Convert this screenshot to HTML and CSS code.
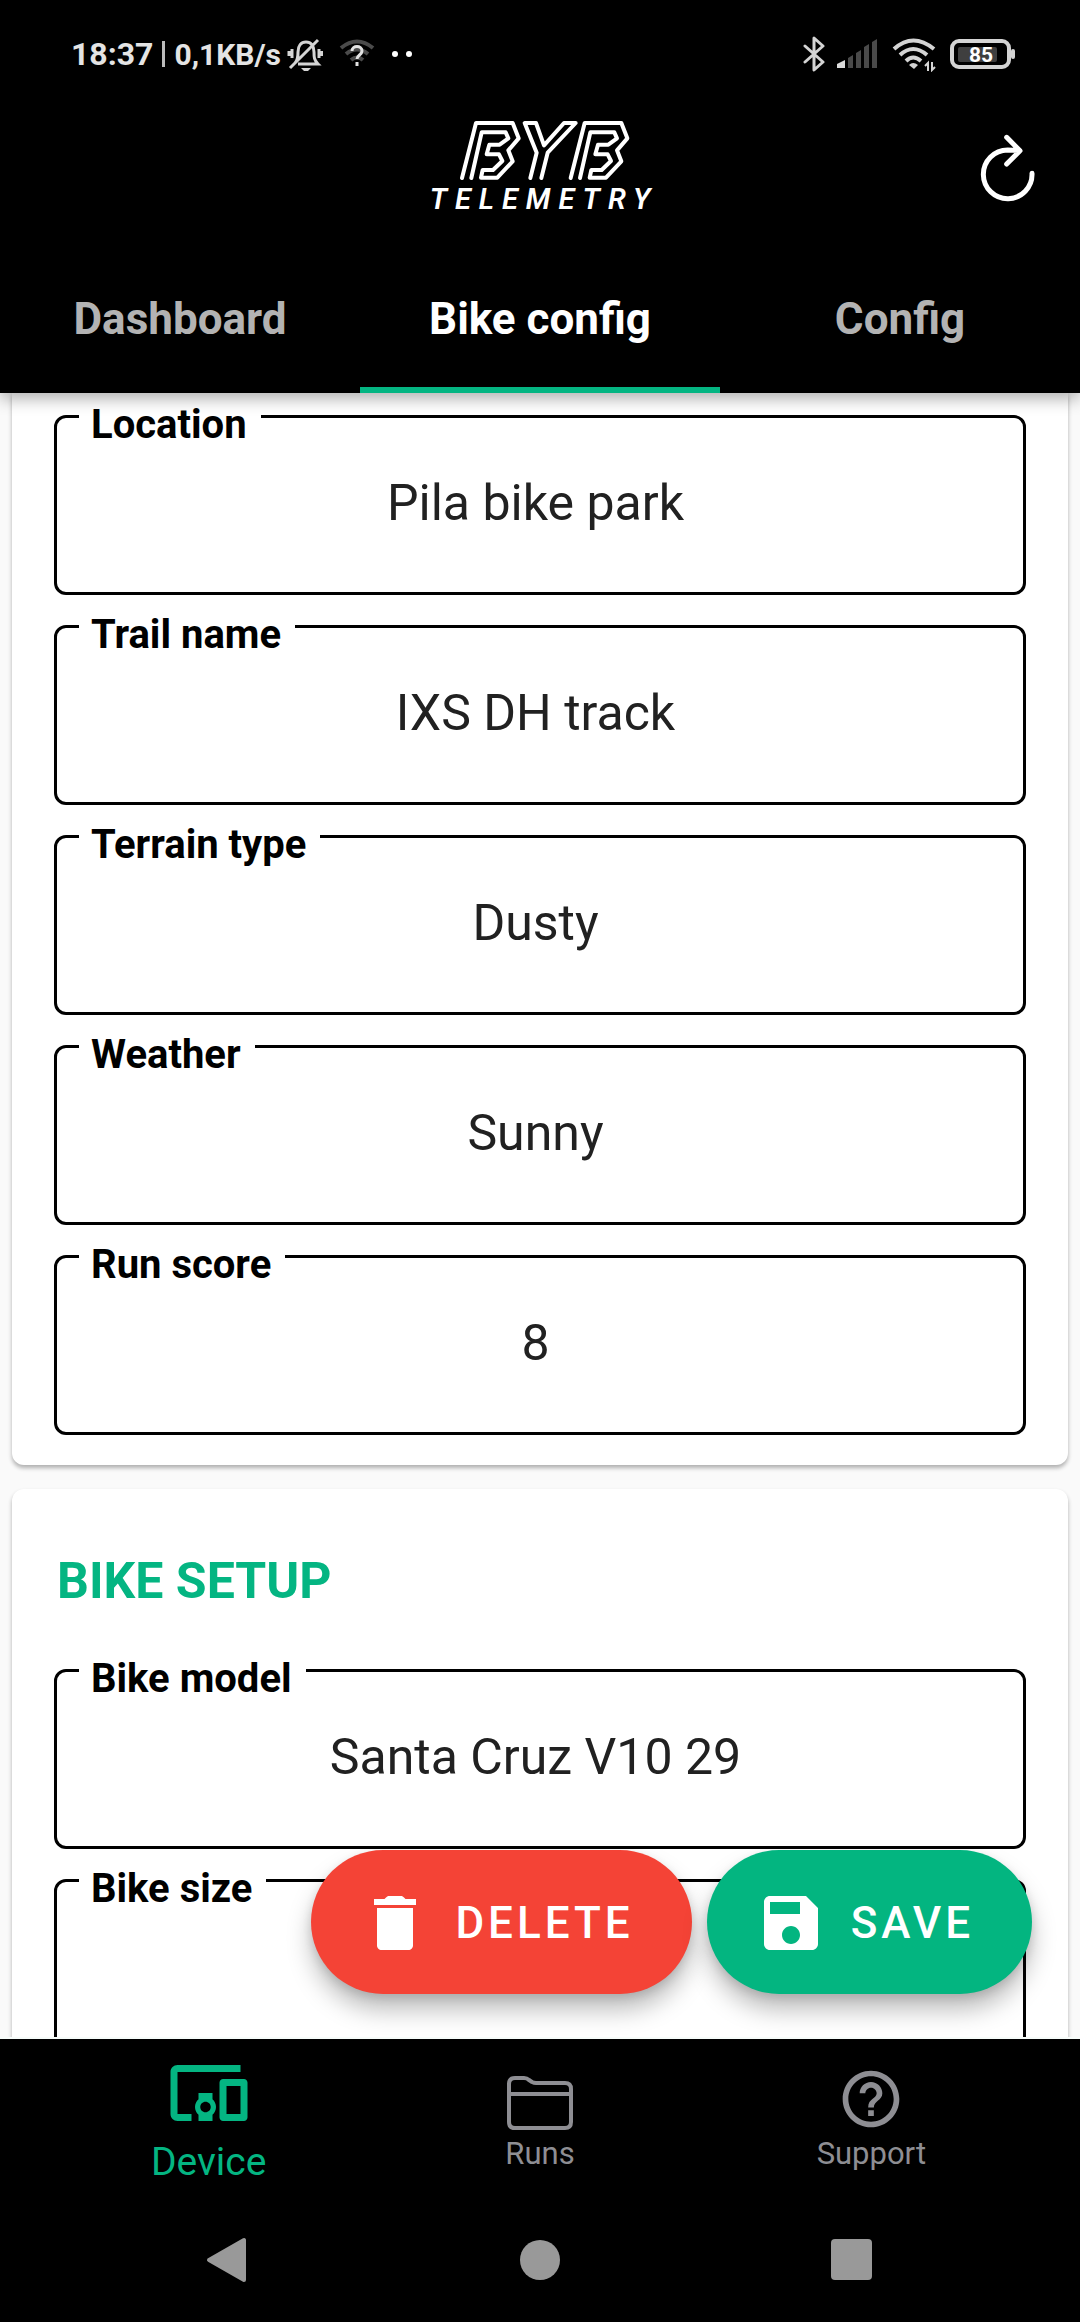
FILE: index.html
```html
<!DOCTYPE html>
<html lang="en">
<head>
  <meta charset="utf-8">
  <meta name="viewport" content="width=device-width, initial-scale=1">
  <title>BYB Telemetry – Bike config</title>
  <link rel="stylesheet" href="styles.css">
</head>
<body>
  <header class="top">
    <div class="status">
      <div class="status-group">
        <span class="clock">18:37</span>
        <span class="divider"></span>
        <span class="speed">0,1KB/s</span>
        <svg class="status-bell" width="36" height="36" viewBox="0 0 36 36" fill="none" stroke="#d4d4d4" stroke-width="2">
          <path d="M8 27c3-3 3-6 3-11 0-6 3-10 8-10s8 4 8 10c0 5 0 8 4 12H11M3 32 31 4M5 13v9M2 15v5M32 13v9M35 15v5" stroke-width="3"/>
          <path d="M14 32h10l-3 3h-4z" fill="#d4d4d4" stroke="none"/>
        </svg>
        <svg class="status-net" width="36" height="30" viewBox="0 0 36 30" fill="none" stroke="#4b4b4b" stroke-width="4">
          <path d="M2 9q16-13 32 0M7 15q11-9 22 0M12 21q6-5 12 0"/>
          <path d="M13 12c0-6 10-6 10 0 0 4-5 4-5 8M18 23v4" stroke="#e2e2e2" stroke-width="3"/>
        </svg>
        <svg width="22" height="8" viewBox="0 0 22 8" fill="#fff"><circle cx="4" cy="4" r="3"/><circle cx="18" cy="4" r="3"/></svg>
      </div>
      <div class="status-group">
        <svg width="24" height="36" viewBox="0 0 24 36" fill="none" stroke="#d4d4d4" stroke-width="3" stroke-linejoin="round" stroke-linecap="round">
          <path d="M3 10l18 16-9 8V2l9 8L3 26"/>
        </svg>
        <svg class="status-cell" width="42" height="30" viewBox="0 0 42 30" fill="#4a4a4a">
          <path d="M1 25l8-4v8H1z" fill="#dcdcdc"/>
          <path d="M12 19l5-3v13h-5zM20 14l5-3v18h-5zM28 8l5-3v24h-5zM36 3l5-3v29h-5z"/>
        </svg>
        <svg class="status-wifi" width="44" height="36" viewBox="0 0 44 36" fill="none" stroke="#d4d4d4" stroke-width="4">
          <path d="M2 13q19-17 40 0M8 19q13-12 27 0M14 25q7-7 15 0"/>
          <path d="M17 29q4-4 9 0l-4 4z" fill="#d4d4d4" stroke="none"/>
          <path d="M36 35v-8l-3 3M40 26v8l3-3" stroke-width="2"/>
        </svg>
        <svg width="66" height="32" viewBox="0 0 66 32">
          <rect x="2" y="3" width="57" height="26" rx="7" fill="none" stroke="#d4d4d4" stroke-width="4"/>
          <rect x="8" y="9" width="39" height="15" rx="2" fill="#3f3f3f"/>
          <rect x="61" y="11" width="4" height="10" rx="2" fill="#d4d4d4"/>
          <text x="31" y="24" class="battery-text">85</text>
        </svg>
      </div>
    </div>

    <div class="appbar">
      <div class="logo">
        <svg class="logo-mark" width="174" height="62" viewBox="148 57 522 186" fill="none" stroke="#fff" stroke-width="12" stroke-linejoin="round" stroke-linecap="round" role="img" aria-label="BYB">
          <path id="mark" d="M157 231 199 66H309L327 112 296 148 309 181 263 230H214L219 207H250L278 180 268 160H231L239 131H270L296 112 288 94H216L185 231"/>
          <path d="M362 231 381 155 345 66H379L403 133 463 66H498L414 155 395 231"/>
          <use href="#mark" x="326"/>
        </svg>
        <span class="logo-word">TELEMETRY</span>
      </div>
      <button class="refresh" type="button" aria-label="Refresh">
        <svg width="56" height="68" viewBox="60 42 168 204" fill="none" stroke="#fff" stroke-width="15" stroke-linecap="round" stroke-linejoin="round">
          <path d="M216 160A73 73 0 1 1 143 90L180 92M140 52l40 40-40 40"/>
        </svg>
      </button>
    </div>

    <nav class="tabs">
      <a class="tab" href="#dashboard">Dashboard</a>
      <a class="tab tab-active" href="#bike">Bike config</a>
      <a class="tab" href="#config">Config</a>
    </nav>
  </header>

  <main class="content">
    <section class="card card-scrolled">
      <div class="field"><label for="location">Location</label><input id="location" type="text" value="Pila bike park"></div>
      <div class="field"><label for="trail">Trail name</label><input id="trail" type="text" value="IXS DH track"></div>
      <div class="field"><label for="terrain">Terrain type</label><input id="terrain" type="text" value="Dusty"></div>
      <div class="field"><label for="weather">Weather</label><input id="weather" type="text" value="Sunny"></div>
      <div class="field"><label for="score">Run score</label><input id="score" type="text" value="8"></div>
    </section>

    <section class="card">
      <h2>BIKE SETUP</h2>
      <div class="field"><label for="model">Bike model</label><input id="model" type="text" value="Santa Cruz V10 29"></div>
      <div class="field"><label for="size">Bike size</label><input id="size" type="text"></div>
    </section>

    <div class="actions">
      <button class="fab fab-delete" type="button">
        <svg width="72" height="72" viewBox="0 0 24 24" fill="#fff"><path d="M6 19.500c0 .8.700 1.500 1.500 1.500h9c.8 0 1.500-.7 1.500-1.500V7H6zM19 4h-3.500l-.6-.6c-.3-.3-.6-.4-1-.4h-3.800c-.4 0-.7.100-1 .4L8.500 4H5v2h14z"/></svg>
        DELETE
      </button>
      <button class="fab fab-save" type="button">
        <svg width="72" height="72" viewBox="0 0 24 24" fill="#fff"><path d="M17 3H5c-1.110 0-2 .9-2 2v14c0 1.100.89 2 2 2h14c1.100 0 2-.9 2-2V7l-4-4zm-5 16c-1.660 0-3-1.340-3-3s1.340-3 3-3 3 1.340 3 3-1.340 3-3 3zm3-10H5V5h10v4z"/></svg>
        SAVE
      </button>
    </div>
  </main>

  <footer class="bottom">
    <nav class="bottom-tabs">
      <a class="bottom-tab bottom-tab-active" href="#device">
        <svg width="84" height="84" viewBox="0 0 24 24" fill="currentColor"><path d="M3 6h18V4H3c-1.100 0-2 .9-2 2v12c0 1.100.9 2 2 2h4v-2H3V6zm10 6H9v1.780c-.61.55-1 1.330-1 2.220s.39 1.670 1 2.220V20h4v-1.780c.61-.55 1-1.340 1-2.220s-.39-1.670-1-2.220V12zm-2 5.500c-.83 0-1.500-.67-1.500-1.500s.67-1.500 1.500-1.500 1.500.67 1.500 1.500-.67 1.500-1.500 1.500zM22 8h-6c-.5 0-1 .5-1 1v10c0 .5.5 1 1 1h6c.5 0 1-.5 1-1V9c0-.5-.5-1-1-1zm-1 10h-4v-8h4v8z"/></svg>
        Device
      </a>
      <a class="bottom-tab" href="#runs">
        <svg width="68" height="68" viewBox="0 0 68 68" fill="none" stroke="currentColor" stroke-width="4" stroke-linejoin="round"><path d="M3 29V19q0-6 6-6h9q3 0 5 2l3 2q2 1 4 1h29q6 0 6 6v33q0 6-6 6H9q-6 0-6-6V29h62"/></svg>
        Runs
      </a>
      <a class="bottom-tab" href="#support">
        <svg width="68" height="68" viewBox="0 0 24 24" fill="currentColor"><path d="M11 18h2v-2h-2v2zm1-16C6.480 2 2 6.480 2 12s4.480 10 10 10 10-4.480 10-10S17.520 2 12 2zm0 18c-4.410 0-8-3.590-8-8s3.590-8 8-8 8 3.590 8 8-3.590 8-8 8zm0-14c-2.210 0-4 1.790-4 4h2c0-1.100.9-2 2-2s2 .9 2 2c0 2-3 1.750-3 5h2c0-2.250 3-2.500 3-5 0-2.210-1.790-4-4-4z"/></svg>
        Support
      </a>
    </nav>
    <div class="system-nav">
      <button type="button" aria-label="Back"><svg width="46" height="46" viewBox="0 0 46 46" fill="#999" stroke="#999" stroke-width="4" stroke-linejoin="round"><path d="M4 23 39 3v40z"/></svg></button>
      <button type="button" aria-label="Home"><svg width="46" height="46" viewBox="0 0 46 46" fill="#999"><circle cx="23" cy="23" r="20"/></svg></button>
      <button type="button" aria-label="Recent apps"><svg width="46" height="46" viewBox="0 0 46 46" fill="#999"><rect x="2" y="2" width="41" height="41" rx="4"/></svg></button>
    </div>
  </footer>
</body>
</html>
```
FILE: styles.css
```css
* {
  box-sizing: border-box;
}

body {
  margin: 0;
  height: 100vh;
  display: flex;
  flex-direction: column;
  background: #fafafa;
  font-family: Roboto, "Liberation Sans", sans-serif;
}

svg {
  display: block;
  flex: none;
}

button {
  border: 0;
  padding: 0;
  background: none;
  font-family: inherit;
}

a {
  text-decoration: none;
}

/* Header */
.top {
  position: relative;
  z-index: 1;
  background: #000;
  box-shadow: 0 6px 15px rgba(0, 0, 0, 0.3);
}

.status {
  display: flex;
  justify-content: space-between;
  padding: 27px 64px 0 71px;
  color: #e4e4e4;
}

.status-group {
  display: flex;
  align-items: center;
  height: 54px;
}

.clock {
  font-size: 32px;
  font-weight: 700;
}

.divider {
  width: 3px;
  height: 26px;
  margin: 0 9px;
  background: #bbb;
}

.speed {
  font-size: 30px;
  font-weight: 700;
}

.status-bell {
  margin-left: 6px;
}

.status-net {
  margin: 0 16px;
}

.status-cell {
  margin-left: 10px;
}

.status-wifi {
  margin: 0 14px;
}

.battery-text {
  fill: #fff;
  font-size: 21px;
  font-weight: 700;
  text-anchor: middle;
}

.appbar {
  display: grid;
  grid-template-columns: 1fr auto 1fr;
  align-items: center;
  height: 168px;
  padding: 6px 44px 0;
}

.logo {
  grid-column: 2;
  display: flex;
  flex-direction: column;
  align-items: center;
  color: #fff;
}

.logo-mark {
  margin-left: 12px;
}

.logo-word {
  padding-left: 8px;
  font-size: 29px;
  font-style: italic;
  font-weight: 600;
  line-height: 34px;
  letter-spacing: 8px;
}

.refresh {
  justify-self: end;
}

.tabs {
  display: grid;
  grid-template-columns: repeat(3, 1fr);
}

.tab {
  padding: 44px 0 41px;
  border-bottom: 6px solid transparent;
  color: #b3b3b3;
  font-size: 44px;
  font-weight: 700;
  line-height: 53px;
  text-align: center;
}

.tab-active {
  border-bottom-color: #04b582;
  color: #fff;
}

/* Form cards */
.content {
  position: relative;
  flex: 1;
  min-height: 0;
  overflow: hidden;
}

.card {
  display: flex;
  flex-direction: column;
  gap: 30px;
  margin: 0 12px 24px;
  padding: 62px 42px 30px;
  border-radius: 12px;
  background: #fff;
  box-shadow: 0 3px 4px rgba(0, 0, 0, 0.3);
}

.card-scrolled {
  padding-top: 22px;
  border-radius: 0 0 12px 12px;
}

.card h2 {
  margin: 0 0 28px 3px;
  color: #04b582;
  font-size: 50px;
  font-weight: 700;
  line-height: 60px;
}

.field {
  position: relative;
}

.field label {
  position: absolute;
  top: -14px;
  left: 25px;
  padding: 0 14px 0 12px;
  background: #fff;
  color: #000;
  font-size: 40px;
  font-weight: 700;
  line-height: 48px;
}

.field input {
  display: block;
  width: 100%;
  height: 180px;
  padding: 0 12px 4px 3px;
  border: 3px solid #000;
  border-radius: 12px;
  background: transparent;
  color: #212121;
  font-family: inherit;
  font-size: 50px;
  text-align: center;
}

/* Floating actions */
.actions {
  position: absolute;
  right: 48px;
  bottom: 43px;
  display: flex;
  gap: 15px;
}

.fab {
  display: flex;
  align-items: center;
  gap: 24px;
  height: 144px;
  padding: 2px 58px 0 48px;
  border-radius: 72px;
  color: #fff;
  font-size: 44px;
  font-weight: 500;
  letter-spacing: 4px;
  box-shadow: 0 16px 24px rgba(0, 0, 0, 0.26), 0 4px 10px rgba(0, 0, 0, 0.12);
}

.fab-delete {
  background: #f44336;
}

.fab-save {
  background: #03b580;
}

/* Bottom bars */
.bottom {
  position: relative;
  border-top: 2px solid #f7fcfa;
  background: #000;
}

.bottom-tabs {
  display: grid;
  grid-template-columns: repeat(3, 1fr);
  height: 158px;
  padding: 1px 43px 0;
}

.bottom-tab {
  display: flex;
  flex-direction: column;
  align-items: center;
  justify-content: center;
  gap: 3px;
  color: #8e8e93;
  font-size: 31px;
  line-height: 36px;
}

.bottom-tab-active {
  color: #04b582;
  font-size: 39px;
  line-height: 48px;
}

.system-nav {
  display: grid;
  grid-template-columns: repeat(3, 1fr);
  justify-items: center;
  align-items: center;
  height: 125px;
  padding: 0 72px;
}
```
